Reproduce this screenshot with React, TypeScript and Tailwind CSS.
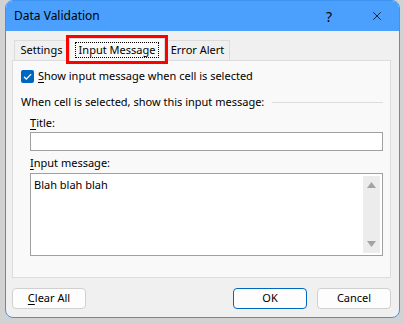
import { X } from 'lucide-react';

// Underlined access-key letter, Windows dialog style
function Key({ children }: { children: string }) {
  return <span className="underline underline-offset-[2px]">{children}</span>;
}

function Tab({ label, active, width }: { label: string; active?: boolean; width: string }) {
  if (active) {
    return (
      <div className={`relative z-10 -mb-px -mt-[3px] flex h-[23px] items-center justify-center border border-b-0 border-[#dcdcdc] bg-[#f9f9f9] ${width}`}>
        <span className="border border-dotted border-black px-[3px] leading-[14px]">{label}</span>
        {/* red annotation box */}
        <div className="pointer-events-none absolute -left-[4px] -top-[4px] h-[29px] w-[102px] border-[3px] border-[#ff0000]" />
      </div>
    );
  }
  return (
    <div className={`flex h-[20px] items-center justify-center border border-b-0 border-[#dcdcdc] bg-[#f0f0f0] ${width}`}>
      {label}
    </div>
  );
}

function Button({ label, primary }: { label: React.ReactNode; primary?: boolean }) {
  return (
    <button
      className={`flex h-[21px] w-[74px] items-center justify-center rounded-[4px] border bg-[#fdfdfd] text-black ${primary ? 'border-[#0067c0]' : 'border-[#d0d0d0]'}`}
    >
      {label}
    </button>
  );
}

export default function App() {
  return (
    <div
      className="h-[324px] w-[404px] bg-[#d2d2d2] text-[11px] text-black"
      style={{ fontFamily: '"Noto Sans", "Open Sans", sans-serif' }}
    >
      <div className="ml-[5px] flex h-[318px] w-[395px] flex-col overflow-hidden rounded-[8px] border border-[#3d94f0] bg-[#f0f0f0]">
        {/* Title bar */}
        <div className="flex h-[30px] shrink-0 items-center bg-[#4aa0fc] pl-[8px] pr-[15px]">
          <span className="flex-1 text-[12px]">Data Validation</span>
          <span className="mr-[38px] text-[14px]">?</span>
          <X className="h-[14px] w-[14px]" strokeWidth={1.3} />
        </div>

        {/* Body */}
        <div className="flex flex-1 flex-col pl-[6px] pr-[8px] pt-[9px]">
          {/* Tabs */}
          <div className="flex h-[20px] items-end pl-[2px]">
            <Tab label="Settings" width="w-[55px]" />
            <Tab label="Input Message" width="w-[96px]" active />
            <Tab label="Error Alert" width="w-[65px]" />
          </div>

          {/* Panel */}
          <div className="flex h-[218px] flex-col border border-[#dcdcdc] bg-[#f9f9f9] pl-[8px] pr-[6px]">
            <div className="mt-[8px] flex h-[14px] items-center gap-[4px]">
              <div className="flex h-[13px] w-[13px] items-center justify-center rounded-[2px] bg-[#0067c0]">
                <svg viewBox="0 0 13 13" className="h-[13px] w-[13px]">
                  <path d="M3 6.8l2.3 2.3 4.8-5" fill="none" stroke="#fff" strokeWidth="1.3" />
                </svg>
              </div>
              <span>
                <Key>S</Key>how input message when cell is selected
              </span>
            </div>

            <div className="mt-[12px] flex h-[14px] items-center gap-[8px]">
              <span className="whitespace-nowrap">When cell is selected, show this input message:</span>
              <div className="mr-[1px] h-px flex-1 bg-[#dcdcdc]" />
            </div>

            <div className="ml-[9px] mr-[1px] flex flex-col">
              <div className="mt-[7px] h-[14px] leading-[14px]">
                <Key>T</Key>itle:
              </div>
              <div className="mt-[2px] h-[19px] border border-[#a0a0a0] bg-white" />

              <div className="mt-[5px] h-[14px] leading-[14px]">
                <Key>I</Key>nput message:
              </div>
              <div className="mt-[3px] flex h-[83px] border border-[#a0a0a0] bg-white">
                <div className="flex-1 pl-[3px] pt-[4px] leading-[14px]">Blah blah blah</div>
                <div className="my-[2px] mr-[2px] flex w-[17px] flex-col items-center justify-between bg-[#ececec] py-[6px]">
                  <svg viewBox="0 0 9 6" className="h-[6px] w-[9px]">
                    <path d="M0 6L4.5 0 9 6z" fill="#a3a3a3" />
                  </svg>
                  <svg viewBox="0 0 9 6" className="h-[6px] w-[9px]">
                    <path d="M0 0L4.5 6 9 0z" fill="#a3a3a3" />
                  </svg>
                </div>
              </div>
            </div>
          </div>

          {/* Buttons */}
          <div className="mt-[10px] flex items-center">
            <Button label={<span><Key>C</Key>lear All</span>} />
            <div className="flex-1" />
            <Button label="OK" primary />
            <div className="w-[10px]" />
            <Button label="Cancel" />
          </div>
        </div>
      </div>
    </div>
  );
}
